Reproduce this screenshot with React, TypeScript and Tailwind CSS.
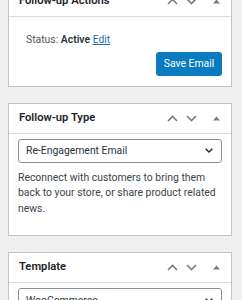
import React from "react";

const font = { fontFamily: "Roboto, 'Liberation Sans', sans-serif" };

function Chevron({ dir, color = "#787c82", w = 11 }: { dir: "up" | "down"; color?: string; w?: number }) {
  return (
    <svg width={w} height="7" viewBox="0 0 11 7" className="block">
      <path
        d={dir === "up" ? "M1 6 L5.5 1.5 L10 6" : "M1 1 L5.5 5.5 L10 1"}
        fill="none"
        stroke={color}
        strokeWidth="1.6"
      />
    </svg>
  );
}

function Header({ title }: { title: string }) {
  return (
    <div className="flex h-[30px] items-center border-b border-[#dcdcde]">
      <div className="pl-[10px] text-[11.2px] font-semibold text-[#1d2327]">{title}</div>
      <div className="ml-auto flex items-center pr-[11px]">
        <Chevron dir="up" />
        <div className="w-[8px]" />
        <Chevron dir="down" />
        <div className="w-[16px]" />
        <svg width="7" height="5" viewBox="0 0 7 5" className="block">
          <path d="M0 4.5 L3.5 0.5 L7 4.5 Z" fill="#787c82" />
        </svg>
      </div>
    </div>
  );
}

function Select({ value }: { value: string }) {
  return (
    <div className="flex h-[24px] items-center rounded-[3px] border border-[#8c8f94] bg-white pl-[7px] pr-[8px] text-[10.4px] text-[#2c3338]">
      <span>{value}</span>
      <span className="ml-auto">
        <svg width="8" height="5" viewBox="0 0 8 5" className="block">
          <path d="M0.7 0.7 L4 4 L7.3 0.7" fill="none" stroke="#1d2327" strokeWidth="1.4" />
        </svg>
      </span>
    </div>
  );
}

export default function App() {
  return (
    <div className="h-[300px] overflow-hidden bg-[#f0f0f1] pl-[8px] pr-[10px]" style={font}>
      <div className="mt-[-14px] flex flex-col gap-[16px]">
        <div className="border border-[#c3c4c7] bg-white">
          <Header title="Follow-up Actions" />
          <div className="px-[9px] pb-[10px]">
            <div className="pl-[8px] pt-[15px] text-[10.4px] leading-[15.6px] text-[#50575e]">
              Status: <span className="font-semibold text-[#2c3338]">Active</span>{" "}
              <span className="text-[#2271b1] underline">Edit</span>
            </div>
            <div className="mt-[4px] flex justify-end">
              <div className="flex h-[24px] w-[66px] items-center justify-center rounded-[3px] bg-[#0a7bbf] text-[10.4px] text-white">
                Save Email
              </div>
            </div>
          </div>
        </div>

        <div className="border border-[#c3c4c7] bg-white">
          <Header title="Follow-up Type" />
          <div className="px-[9px] pt-[5px] pb-[19px]">
            <Select value="Re-Engagement Email" />
            <p className="mt-[7px] text-[10.4px] leading-[15.6px] text-[#3c434a]">
              Reconnect with customers to bring them back to your store, or share product related news.
            </p>
          </div>
        </div>

        <div className="border border-[#c3c4c7] bg-white">
          <Header title="Template" />
          <div className="px-[9px] pt-[5px] pb-[19px]">
            <Select value="WooCommerce" />
          </div>
        </div>
      </div>
    </div>
  );
}
